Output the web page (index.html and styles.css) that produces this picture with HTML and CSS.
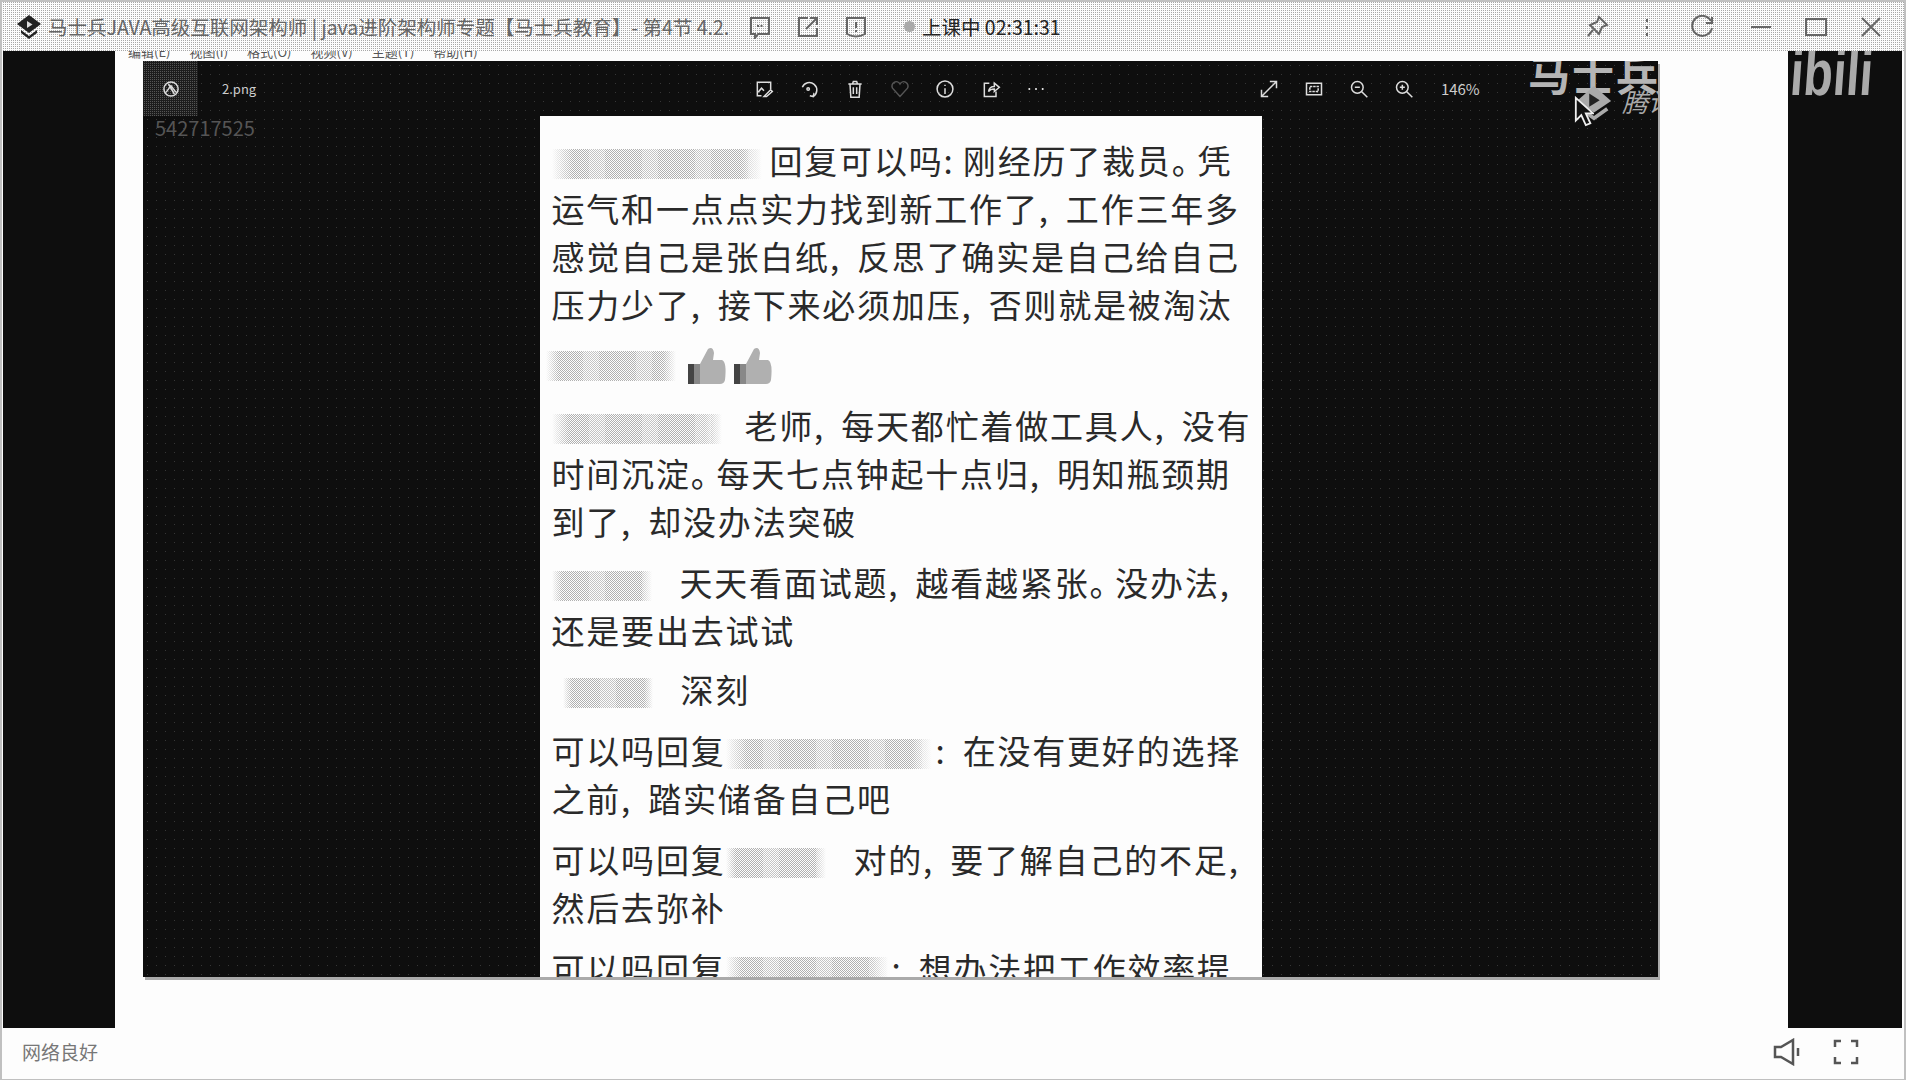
FILE: index.html
```html
<!DOCTYPE html>
<html lang="zh-CN">
<head>
    <meta charset="UTF-8">
    <title>马士兵JAVA高级互联网架构师</title>
    <link rel="stylesheet" href="styles.css">
</head>
<body>
    <div class="app">
        <!-- window title bar -->
        <header class="titlebar">
            <svg class="logo" viewBox="0 0 24 24"><path d="M12 0 24 9 12 18 0 9Z" fill="#222"/><path d="M4 15 12 21 20 15V18L12 24 4 18Z" fill="#222"/><path d="M10 6 15.500 9.500 10 13Z" fill="#ddd"/></svg>
            <div class="title">马士兵JAVA高级互联网架构师 | java进阶架构师专题【马士兵教育】- 第4节 4.2.</div>
            <div class="title-tools">
                <svg class="icon" viewBox="0 0 24 24"><path d="M3 3H21V19H10L7 23V19H3Z"/><path d="M9 11H15" stroke-dasharray="2 1.500"/></svg>
                <svg class="icon" viewBox="0 0 24 24"><path d="M12 3H3V21H21V13"/><path d="M10 14 20 4M14 3H21V10"/></svg>
                <svg class="icon" viewBox="0 0 24 24"><path d="M3 3H21V19Q12 24 3 19Z"/><path d="M12 7V13M12 15V17"/></svg>
            </div>
            <span class="live-dot"></span>
            <div class="live-text">上课中 02:31:31</div>
            <div class="window-tools">
                <svg class="icon pin" viewBox="0 0 24 24"><path d="M14 2 22 10 17 12 14 19 5 10 12 7ZM8 15 3 21"/></svg>
                <svg class="icon dots" viewBox="0 0 24 24"><path d="M12 4V7M12 11V14M12 18V21"/></svg>
                <svg class="icon refresh" viewBox="0 0 24 24"><path d="M21 6A10 10 0 1 0 22 13"/><path d="M22 2V8H16"/></svg>
                <svg class="icon min" viewBox="0 0 24 24"><path d="M2 12H22"/></svg>
                <svg class="icon max" viewBox="0 0 24 24"><path d="M2 4H22V20H2Z"/></svg>
                <svg class="icon close" viewBox="0 0 24 24"><path d="M3 3 21 21M21 3 3 21"/></svg>
            </div>
        </header>

        <main class="stage">
            <div class="side">
            </div>
            <div class="center">
                <div class="menu-strip">
                    <span>编辑(E)</span><span>视图(I)</span><span>格式(O)</span><span>视频(V)</span><span>主题(T)</span><span>帮助(H)</span>
                </div>
                <section class="viewer">
                    <div class="viewer-bar">
                        <div class="bar-left">
                            <div class="home-btn">
                                <svg class="vicon" viewBox="0 0 24 24"><circle cx="12" cy="12" r="8.500"/><path d="M6 16 12 8 18 16M9 6 16 18"/></svg>
                            </div>
                            <span class="filename">2.png</span>
                        </div>
                        <div class="bar-center">
                            <svg class="vicon" viewBox="0 0 24 24"><path d="M9 20H4V4H20V12"/><path d="M5 16 9 11 12 14M12 21 20 13 22 15 15 21Z"/></svg>
                            <svg class="vicon" viewBox="0 0 24 24"><path d="M4 10A9 9 0 1 1 17 21"/><path d="M13 20 17 21 18 17"/><circle cx="11" cy="12" r="1.500"/></svg>
                            <svg class="vicon" viewBox="0 0 24 24"><path d="M4 6H20M6 6 7 22H17L18 6M9 6 10 3H14L15 6M10 10V18M14 10V18"/></svg>
                            <svg class="vicon dim" viewBox="0 0 24 24"><path d="M12 21 3 11A5 5 0 0 1 12 6 5 5 0 0 1 21 11Z"/></svg>
                            <svg class="vicon" viewBox="0 0 24 24"><circle cx="12" cy="12" r="9.500"/><path d="M12 7V8.500M12 11V18"/></svg>
                            <svg class="vicon" viewBox="0 0 24 24"><path d="M10 5H4V21H18V15"/><path d="M9 15Q10 9 16 9V5L22 10 16 15V12Q11 12 9 15Z"/></svg>
                            <svg class="vicon" viewBox="0 0 24 24"><path d="M3 12H5M11 12H13M19 12H21" stroke-width="2.500"/></svg>
                        </div>
                        <div class="bar-right">
                            <svg class="vicon" viewBox="0 0 24 24"><path d="M3 21 21 3M13 3H21V11M3 13V21H11"/></svg>
                            <svg class="vicon" viewBox="0 0 24 24"><path d="M3 5H21V19H3Z"/><path d="M7 9H17V15H7Z" stroke-dasharray="3 1"/></svg>
                            <svg class="vicon" viewBox="0 0 24 24"><circle cx="10" cy="10" r="7"/><path d="M7 10H13M15 15 22 22"/></svg>
                            <svg class="vicon" viewBox="0 0 24 24"><circle cx="10" cy="10" r="7"/><path d="M7 10H13M10 7V13M15 15 22 22"/></svg>
                            <span class="zoom-level">146%</span>
                        </div>
                    </div>

                    <div class="picture">
                        <p><span class="blurred w-210"></span>回复可以吗:&thinsp;刚经历了裁员<span class="stop">。</span>凭运气和一点点实力找到新工作了, 工作三年多感觉自己是张白纸, 反思了确实是自己给自己压力少了, 接下来必须加压, 否则就是被淘汰</p>
                        <p class="thumbs-row">
                            <span class="blurred w-130"></span>
                            <svg class="thumb" viewBox="0 0 40 40"><path d="M13 18 21 3Q26 0 27 7L26 14H35Q40 16 38 34Q37 38 33 38H13Z" fill="#b0b0b0"/><path d="M1 18H13V38H1Z" fill="#888"/><path d="M1 18H7V38H1Z" fill="#444"/></svg>
                            <svg class="thumb" viewBox="0 0 40 40"><path d="M13 18 21 3Q26 0 27 7L26 14H35Q40 16 38 34Q37 38 33 38H13Z" fill="#b0b0b0"/><path d="M1 18H13V38H1Z" fill="#888"/><path d="M1 18H7V38H1Z" fill="#444"/></svg>
                        </p>
                        <p><span class="blurred w-170"></span>老师, 每天都忙着做工具人, 没有时间沉淀<span class="stop">。</span>每天七点钟起十点归, 明知瓶颈期到了, 却没办法突破</p>
                        <p class="tight"><span class="blurred w-100"></span>天天看面试题, 越看越紧张<span class="stop">。</span>没办法, 还是要出去试试</p>
                        <p><span class="blurred w-90 indent"></span>深刻</p>
                        <p>可以吗回复<span class="blurred w-206"></span>: 在没有更好的选择之前, 踏实储备自己吧</p>
                        <p>可以吗回复<span class="blurred w-100"></span>对的, 要了解自己的不足, 然后去弥补</p>
                        <p>可以吗回复<span class="blurred w-162"></span>: 想办法把工作效率提高</p>
                    </div>

                    <div class="qq-number">542717525</div>
                    <div class="mark-name">马士兵</div>
                    <svg class="mark-logo" viewBox="0 0 40 40"><path d="M20 2 38 18 20 30 2 18Z" fill="#aaa"/><path d="M15 10 26 17 15 24Z" fill="#222"/><path d="M6 26 20 36 34 26" fill="none" stroke="#aaa" stroke-width="4"/></svg>
                    <div class="mark-sub">腾讯</div>
                    <svg class="cursor" viewBox="0 0 22 34"><path d="M2 2V27L8 21 13 32 18 30 13 19H21Z" fill="#111" stroke="#eee" stroke-width="2"/></svg>
                </section>
            </div>
            <div class="side side-right">
                <div class="mark-bili">ibili</div>
            </div>
        </main>

        <footer class="statusbar">
            <span class="net">网络良好</span>
            <div class="player-tools">
                <svg class="ptool" viewBox="0 0 28 28"><path d="M2 9H8L20 2V26L8 19H2Z"/><path d="M25 10V18"/></svg>
                <svg class="ptool" viewBox="0 0 28 28"><path d="M3 9V3H9M19 3H25V9M25 19V25H19M9 25H3V19"/></svg>
            </div>
        </footer>
    </div>
</body>
</html>
```

FILE: styles.css
```css
/* recorded class window, dithered like the source video */
html, body {
    margin: 0;
    padding: 0;
    background-color: #fdfdfd;
}

.app {
    width: 1906px;
    height: 1080px;
    box-sizing: border-box;
    border: 2px solid #c0c0c0;
    border-bottom-width: 1px;
    display: flex;
    flex-direction: column;
    overflow: hidden;
    font-family: "Noto Sans CJK SC", "Noto Sans", sans-serif;
}

.titlebar {
    height: 49px;
    flex: none;
    display: flex;
    align-items: center;
    background: conic-gradient(#a8a8a8 25%, #fdfdfd 0) 0 0 / 2px 2px;
}

.logo {
    width: 24px;
    height: 24px;
    margin-left: 15px;
}

.title {
    width: 695px;
    margin-left: 7px;
    font-size: 19.500px;
    color: #666;
    white-space: nowrap;
}

.title-tools {
    display: flex;
    gap: 24px;
    margin-left: 5px;
}

.icon {
    width: 24px;
    height: 24px;
    fill: none;
    stroke: #666;
    stroke-width: 2;
}

.live-dot {
    width: 11px;
    height: 11px;
    margin-left: 36px;
    border-radius: 50%;
    background-color: #aaa;
}

.live-text {
    margin-left: 7px;
    font-size: 19.500px;
    color: #222;
}

.window-tools {
    margin-left: auto;
    display: flex;
    align-items: center;
}

.window-tools .pin { margin-right: 26px; }
.window-tools .dots { margin-right: 31px; }
.window-tools .refresh { margin-right: 35px; }
.window-tools .min { margin-right: 31px; }
.window-tools .max { margin-right: 31px; }
.window-tools .close { margin-right: 21px; }

.stage {
    flex: none;
    height: 977px;
    display: flex;
}

.side {
    width: 112px;
    flex: none;
    margin-left: 1px;
    background-color: #0e0e0e;
    overflow: hidden;
}

.side-right {
    width: 114px;
    margin-left: 0;
    margin-right: 2px;
}

.center {
    flex: 1;
    background-color: #fdfdfd;
    padding-left: 28px;
}

.menu-strip {
    height: 10px;
    overflow: hidden;
    display: flex;
    gap: 19px;
    margin-left: -15px;
    font-size: 13px;
    line-height: 1px;
    color: #555;
}

.viewer {
    position: relative;
    width: 1515px;
    height: 916px;
    background: radial-gradient(#363636 0.6px, transparent 0.8px) 0 0 / 9px 9px, #0e0e0e;
    box-shadow: 2px 3px 0 #aaa;
    overflow: hidden;
}

.viewer-bar {
    height: 55px;
    display: grid;
    grid-template-columns: 1fr auto 1fr;
    align-items: center;
}

.bar-left {
    display: flex;
    align-items: center;
}

.home-btn {
    width: 55px;
    height: 55px;
    display: flex;
    justify-content: center;
    align-items: center;
    background: conic-gradient(#555 25%, #1c1c1c 0) 0 0 / 2px 2px;
}

.filename {
    margin-left: 24px;
    font-size: 13px;
    color: #ccc;
}

.bar-center {
    display: flex;
    gap: 25.300px;
    margin-right: 1px;
}

.bar-right {
    display: flex;
    align-items: center;
    gap: 25px;
    margin-left: 212px;
}

.vicon {
    width: 20px;
    height: 20px;
    fill: none;
    stroke: #ddd;
    stroke-width: 1.800;
}

.vicon.dim {
    stroke: #555;
}

.zoom-level {
    margin-left: 2px;
    font-size: 15px;
    color: #ccc;
}

.picture {
    width: 722px;
    height: 861px;
    box-sizing: border-box;
    margin: 0 auto;
    padding: 20px 4px 0 12px;
    overflow: hidden;
    background-color: #fdfdfd;
    color: #2a2a2a;
    font-size: 33px;
    letter-spacing: 1.800px;
    word-spacing: 7px;
    line-height: 48px;
}

.picture p {
    margin: 0 0 13px;
}

.picture .thumbs-row {
    display: flex;
    align-items: center;
    gap: 6px;
    margin-top: 18px;
    margin-bottom: 15px;
}

.picture .tight {
    margin-bottom: 11px;
}

/* the 。 in the source picture takes less room than a full cell */
.stop {
    margin-right: -9px;
}

.blurred {
    display: inline-block;
    height: 30px;
    vertical-align: -5px;
    background:
        repeating-linear-gradient(90deg, transparent 0 37px, rgba(253, 253, 253, 0.25) 37px 53px),
        repeating-conic-gradient(#b0b0b0 0 25%, #fdfdfd 0 50%) 0 0 / 2px 2px;
    -webkit-mask-image: linear-gradient(90deg, transparent, #000 10%, #000 90%, transparent);
    mask-image: linear-gradient(90deg, transparent, #000 10%, #000 90%, transparent);
}

.w-90 { width: 90px; margin-right: 28px; }
.w-100 { width: 100px; margin-right: 28px; }
.w-130 { width: 130px; margin-left: -6px; margin-right: 5px; }
.w-162 { width: 162px; margin-right: 4px; }
.w-170 { width: 170px; margin-right: 23px; }
.w-206 { width: 206px; margin-right: 4px; }
.w-210 { width: 210px; margin-right: 8px; }

.indent { margin-left: 11px; }

.thumb {
    width: 40px;
    height: 40px;
}

.qq-number {
    position: absolute;
    left: 12px;
    top: 54px;
    font-size: 20px;
    line-height: 26px;
    color: #555;
}

.mark-name {
    position: absolute;
    left: 1385px;
    top: -13px;
    font-size: 42px;
    font-weight: 700;
    line-height: 50px;
    letter-spacing: 2px;
    color: #b5b5b5;
    white-space: nowrap;
}

.mark-logo {
    position: absolute;
    left: 1432px;
    top: 23px;
    width: 38px;
    height: 38px;
}

.mark-sub {
    position: absolute;
    left: 1479px;
    top: 24px;
    font-size: 26px;
    line-height: 32px;
    font-style: italic;
    color: #aaa;
    white-space: nowrap;
}

.cursor {
    position: absolute;
    left: 1431px;
    top: 35px;
    width: 20px;
    height: 31px;
}

.mark-bili {
    margin: -13px 0 0 5px;
    transform: skewX(-4deg) scaleX(0.75);
    transform-origin: left top;
    font-family: "Liberation Sans", sans-serif;
    font-size: 64px;
    font-weight: 700;
    line-height: 70px;
    color: #aaa;
    white-space: nowrap;
}

.statusbar {
    flex: 1;
    display: flex;
    align-items: center;
    justify-content: space-between;
    padding-bottom: 4px;
    background-color: #fdfdfd;
}

.net {
    margin-left: 20px;
    font-size: 19px;
    color: #777;
}

.player-tools {
    display: flex;
    gap: 31px;
    margin-right: 44px;
    align-items: center;
}

.ptool {
    width: 28px;
    height: 28px;
    fill: none;
    stroke: #555;
    stroke-width: 2.500;
}
```
